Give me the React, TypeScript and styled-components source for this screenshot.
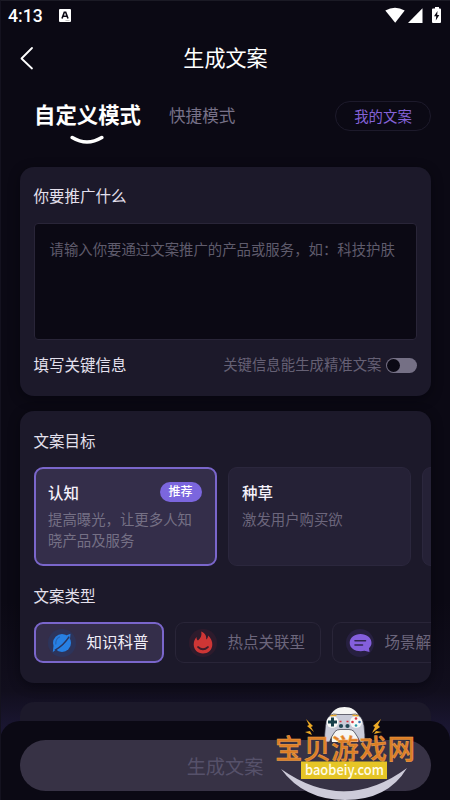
import React from 'react';
import styled, { createGlobalStyle } from 'styled-components';

const GlobalStyle = createGlobalStyle`
  * { box-sizing: border-box; }
  body {
    margin: 0;
    background: #0b0914;
    font-family: "Noto Sans CJK SC", "Noto Sans", sans-serif;
  }
`;

const Screen = styled.div`
  width: 450px;
  height: 800px;
  overflow: hidden;
  display: flex;
  flex-direction: column;
  color: #e9e6f2;
  background: linear-gradient(#0b0914 0, #0b0914 600px, #110e1d 690px, #1a1631 726px);
  border-top: 1px solid #1b1a25;
  border-left: 1px solid #14121f;
`;

const StatusBar = styled.div`
  height: 30px;
  flex: none;
  display: flex;
  align-items: center;
  padding: 0 8px 0 7px;
`;

const Clock = styled.span`
  width: 51px;
  font: 500 17.6px/30px Roboto, sans-serif;
  color: #fff;
`;

const StatusIcons = styled.div`
  margin-left: auto;
  display: flex;
  align-items: center;
`;

const NavBar = styled.div`
  height: 56px;
  flex: none;
  display: grid;
  grid-template-columns: 40px 1fr 40px;
  align-items: center;
  padding: 0 14px 2px;
`;

const Title = styled.h1`
  margin: 0;
  padding-bottom: 3px;
  font-size: 21.1px;
  font-weight: 400;
  line-height: 30px;
  text-align: center;
  color: #fff;
`;

const Modes = styled.div`
  height: 80px;
  flex: none;
  display: flex;
  align-items: flex-start;
  padding: 11px 19px 0 33px;
`;

const ActiveMode = styled.div`
  display: flex;
  flex-direction: column;
  align-items: center;
  width: 107px;
  font-size: 21.4px;
  font-weight: 700;
  line-height: 32px;
  white-space: nowrap;
  color: #fff;
  svg { margin: 4px 1px 0 0; }
`;

const Mode = styled.span`
  margin-left: 28px;
  font-size: 16.6px;
  line-height: 34px;
  color: #777188;
`;

const MineButton = styled.button`
  margin: 3px 0 0 auto;
  padding: 0;
  width: 96px;
  height: 30px;
  border: 1px solid #1d1a2b;
  border-radius: 15px;
  background: transparent;
  font: 400 14.4px/26px "Noto Sans CJK SC", sans-serif;
  color: #8462d8;
`;

const Card = styled.section<{ $height: number }>`
  height: ${(p) => p.$height}px;
  flex: none;
  margin: 0 19.5px 15px 18.5px;
  padding: 0 14px;
  border-radius: 14px;
  overflow: hidden;
  background: #1c192a;
  box-shadow: 0 3px 12px rgba(3, 2, 9, 0.45);
`;

const Label = styled.h2`
  margin: 0;
  font-size: 15.5px;
  font-weight: 400;
  line-height: 24px;
  color: #e4e0ed;
`;

const PromoLabel = styled(Label)`
  padding: 16px 0 16px;
`;

const GoalLabel = styled(Label)`
  padding: 17px 0 15px;
`;

const TypeLabel = styled(Label)`
  padding: 17px 0 15px;
`;

const PromptBox = styled.div`
  height: 117px;
  padding: 14px 0 0 15px;
  border: 1px solid #292538;
  border-radius: 4px;
  background: #0b0914;
  font-size: 14.4px;
  line-height: 22px;
  white-space: nowrap;
  color: #5f5b6c;
`;

const KeyRow = styled.div`
  display: flex;
  align-items: center;
  height: 48px;
`;

const KeyHint = styled.span`
  margin: 0 4px 0 auto;
  font-size: 14.4px;
  line-height: 22px;
  color: #656074;
`;

const Switch = styled.div`
  width: 31px;
  height: 15px;
  margin-top: 3px;
  padding: 1px;
  border-radius: 8px;
  background: #757085;
`;

const Knob = styled.div`
  width: 13px;
  height: 13px;
  border-radius: 50%;
  background: #0b0914;
`;

const Scroller = styled.div`
  display: flex;
  gap: 11px;
  margin-right: -14px;
  overflow: hidden;
`;

const GoalCard = styled.div<{ $active?: boolean }>`
  width: 183px;
  height: 99px;
  flex: none;
  padding: ${(p) => (p.$active ? '11px 13px 11px 12.5px' : '12px 13.5px')};
  border: ${(p) => (p.$active ? '2px solid #7a66cb' : '1px solid #2b273d')};
  border-radius: 9px;
  background: ${(p) => (p.$active ? '#342e4a' : '#252136')};
`;

const GoalHead = styled.div`
  display: flex;
  justify-content: space-between;
  align-items: center;
  height: 24px;
  font-size: 15.5px;
  line-height: 24px;
  font-weight: 500;
  color: #f4f1fa;
`;

const Tag = styled.span`
  width: 42px;
  height: 20px;
  border-radius: 10px;
  background: #7b66de;
  font-size: 12px;
  line-height: 18px;
  text-align: center;
  color: #fff;
`;

const GoalText = styled.p<{ $active?: boolean }>`
  margin: 4px 0 0;
  font-size: 14.4px;
  line-height: 21.4px;
  white-space: nowrap;
  color: ${(p) => (p.$active ? '#757085' : '#6c667c')};
`;

const Chip = styled.div<{ $active?: boolean; $width: number }>`
  width: ${(p) => p.$width}px;
  height: 41px;
  flex: none;
  display: flex;
  align-items: center;
  padding-left: ${(p) => (p.$active ? 12.5 : 13.5)}px;
  border: ${(p) => (p.$active ? '2px solid #7a66cb' : '1px solid #292538')};
  border-radius: 9px;
  background: ${(p) => (p.$active ? '#342e4a' : 'transparent')};
  font-size: 15.5px;
  line-height: 24px;
  white-space: nowrap;
  color: ${(p) => (p.$active ? '#f0edf7' : '#6c667c')};
`;

const ChipText = styled.span`
  padding-bottom: 3px;
`;

const Badge = styled.span<{ $tint: string }>`
  width: 28px;
  height: 28px;
  margin-right: 10.5px;
  display: flex;
  align-items: center;
  justify-content: center;
  border-radius: 50%;
  background: ${(p) => p.$tint};
`;

const NextCard = styled(Card)`
  margin-top: 4px;
  margin-bottom: 0;
  border-radius: 14px 14px 0 0;
  box-shadow: none;
`;

const BottomBar = styled.footer`
  flex: none;
  height: 79px;
  margin-left: -1px;
  padding: 19px 19px 0 19.5px;
  border-radius: 20px 20px 0 0;
  background: #0b0914;
  position: relative;
`;

const GenerateButton = styled.button`
  display: block;
  padding: 0;
  width: 411px;
  height: 51px;
  border: 0;
  border-radius: 25.5px;
  background: #373245;
  font: 400 19.2px/48px "Noto Sans CJK SC", sans-serif;
  color: #56516a;
`;

const Watermark = styled.div`
  position: absolute;
  left: 270px;
  top: -15px;
  width: 150px;
  height: 94px;
  svg { display: block; overflow: visible; }
`;

const Pad = () => (
  <g>
    <path d="M59 12C62 4 68 1 74.500 1C81 1 87 4 90 12L88 36H62Z" fill="#f6f6f4" />
    <path d="M60 9.500Q63 7 68 8.500H81Q86 7 89 9.500Q94 13 94.500 25Q95.500 33 94 36H90Q88 31 84 25.500Q82 23.500 79 23.500H70Q67 23.500 65 25.500Q61 31 59.500 36H56Q54 33 55 25Q55.500 13 60 9.500Z" fill="#c9cbd8" stroke="#30303f" strokeWidth=".7" />
    <circle cx="62.500" cy="16" r="6" fill="#f8f8f6" />
    <circle cx="86" cy="16" r="6" fill="#f8f8f6" />
    <path d="M58 16H67M62.500 11.500V20.500" stroke="#173f49" strokeWidth="3" />
    <circle cx="86" cy="12.500" r="1.300" fill="#d83742" />
    <circle cx="86" cy="19.500" r="1.300" fill="#2596a8" />
    <circle cx="82.500" cy="16" r="1.300" fill="#d83742" />
    <circle cx="89.500" cy="16" r="1.300" fill="#3b6fae" />
    <circle cx="71" cy="20" r="2.100" fill="#214653" />
    <circle cx="77.500" cy="20" r="2.100" fill="#214653" />
    <path d="M69.500 15.500H71.500M76.500 15.500H78.500" stroke="#d83742" strokeWidth="1.500" />
    <path d="M60.500 9.800L66.500 9.200M82.500 9.200L88.500 9.800" stroke="#ebab2d" strokeWidth="1.500" />
  </g>
);

export default function App() {
  return (
    <>
      <GlobalStyle />
      <Screen>
        <StatusBar>
          <Clock>4:13</Clock>
          <svg width="12" height="15" viewBox="0 0 12 15">
            <rect width="12" height="13" rx="1" fill="#fff" />
            <path d="M3 9.500L5.300 3.300H6.700L9 9.500M4.200 7.200H7.800" fill="none" stroke="#0b0914" strokeWidth="1.600" />
            <path d="M6.500 11.500H10.500" stroke="#aaa" strokeWidth=".7" />
          </svg>
          <StatusIcons>
            <svg width="57" height="20" viewBox="0 0 57 20">
              <path d="M0.300 4.500Q10 -1.200 19.700 4.500L10.200 16.800Z" fill="#fff" />
              <path d="M23 17L37.500 2.300V17Z" fill="#fff" />
              <path d="M50 1H54V2.500H55Q56 2.500 56 3.500V16Q56 17 55 17H48Q47 17 47 16V3.500Q47 2.500 48 2.500H50Z" fill="#fff" />
              <path d="M52.500 5L49 10.200H51.200L50.800 14.500L54.300 9H52.200Z" fill="#0b0914" />
            </svg>
          </StatusIcons>
        </StatusBar>
        <NavBar>
          <svg width="20" height="24" viewBox="0 0 20 24">
            <path d="M17 2L6.500 12.500L17 22.500" fill="none" stroke="#fff" strokeWidth="1.800" strokeLinecap="round" strokeLinejoin="round" />
          </svg>
          <Title>生成文案</Title>
        </NavBar>
        <Modes>
          <ActiveMode>
            自定义模式
            <svg width="34" height="11" viewBox="0 0 34 11">
              <path d="M2.200 3.500Q17 12.500 31.800 3.500" fill="none" stroke="#fff" strokeWidth="3.500" strokeLinecap="round" />
            </svg>
          </ActiveMode>
          <Mode>快捷模式</Mode>
          <MineButton>我的文案</MineButton>
        </Modes>

        <Card $height={229}>
          <PromoLabel>你要推广什么</PromoLabel>
          <PromptBox>请输入你要通过文案推广的产品或服务，如：科技护肤</PromptBox>
          <KeyRow>
            <Label>填写关键信息</Label>
            <KeyHint>关键信息能生成精准文案</KeyHint>
            <Switch>
              <Knob />
            </Switch>
          </KeyRow>
        </Card>

        <Card $height={272}>
          <GoalLabel>文案目标</GoalLabel>
          <Scroller>
            <GoalCard $active>
              <GoalHead>
                认知<Tag>推荐</Tag>
              </GoalHead>
              <GoalText $active>
                提高曝光，让更多人知
                <br />
                晓产品及服务
              </GoalText>
            </GoalCard>
            <GoalCard>
              <GoalHead>种草</GoalHead>
              <GoalText>激发用户购买欲</GoalText>
            </GoalCard>
            <GoalCard />
          </Scroller>
          <TypeLabel>文案类型</TypeLabel>
          <Scroller>
            <Chip $active $width={130}>
              <Badge $tint="#2d345b">
                <svg width="20" height="20" viewBox="0 0 20 20">
                  <circle cx="10" cy="10" r="9" fill="#2780e3" />
                  <path d="M14 2.500L18.500 .8L18 6ZM5.500 16L.8 19L1.500 13Z" fill="#2780e3" />
                  <path d="M17.200 3.600Q11.500 12.500 2.800 17.300" fill="none" stroke="#29345f" strokeWidth="1.500" />
                  <path d="M3.800 11Q3.500 6 7.500 4" fill="none" stroke="#2863b2" strokeWidth="1.200" strokeLinecap="round" />
                </svg>
              </Badge>
              <ChipText>知识科普</ChipText>
            </Chip>
            <Chip $width={146}>
              <Badge $tint="#2d1b2c">
                <svg width="20" height="23" viewBox="0 0 20 23">
                  <path d="M8.200 .5C13 2.500 13.500 6 13.200 8.500C14.600 7.800 15 6 15 4.500C18 7 19.600 10.500 19.300 14C19 19 15 22.500 10 22.500C4.500 22.500 .7 18.500 .7 13.500C.7 10.500 2 7.500 3.500 6C3.500 8 4 9 5 9.500C8 7 9 4 8.200 .5Z" fill="#ce3635" />
                  <path d="M5 16Q10 20.500 15 16" fill="none" stroke="#411c2b" strokeWidth="1.700" strokeLinecap="round" />
                </svg>
              </Badge>
              <ChipText>热点关联型</ChipText>
            </Chip>
            <Chip $width={146}>
              <Badge $tint="#272040">
                <svg width="23" height="20" viewBox="0 0 23 20">
                  <path d="M11.500 1C17.500 1 22.500 4.500 22.500 10C22.500 12 21.500 13.800 20 15.200L20.500 19L15.500 17.800C8 19.500 .7 16 .7 10C.7 4.500 5.500 1 11.500 1Z" fill="#845fdc" />
                  <path d="M6 7.700H16.500M6 12H13.500" stroke="#30264e" strokeWidth="1.600" strokeLinecap="round" />
                </svg>
              </Badge>
              <ChipText>场景解决型</ChipText>
            </Chip>
          </Scroller>
        </Card>

        <NextCard $height={19} />
        <BottomBar>
          <GenerateButton>生成文案</GenerateButton>
          <Watermark>
            <svg width="150" height="94" viewBox="0 0 150 94">
              <path d="M11 63Q75 108 137 62Q118 94 75 94Q34 94 11 63Z" fill="#cdcbd9" />
              <Pad />
              <path d="M36 13L43 20L41 21L44 26L37 20L39 19ZM111 13L103 20L105 21L102 27L110 21L108 19ZM35 26L40 25L42 29ZM112 26L106 25L104 28Z" fill="#eba925" />
              <text x="5" y="52.800" fontFamily="Noto Sans CJK SC, sans-serif" fontSize="27.500" fontWeight="500" fill="#dc7d25" stroke="#f0a24f" strokeWidth=".5" textLength="140">宝贝游戏网</text>
              <rect x="31" y="55.500" width="86" height="17.500" fill="#e5c526" />
              <text x="35" y="68.800" fontFamily="Noto Sans CJK SC, sans-serif" fontSize="14.500" fontWeight="500" fill="#fffce8" textLength="79" lengthAdjust="spacingAndGlyphs">baobeiy.com</text>
            </svg>
          </Watermark>
        </BottomBar>
      </Screen>
    </>
  );
}
